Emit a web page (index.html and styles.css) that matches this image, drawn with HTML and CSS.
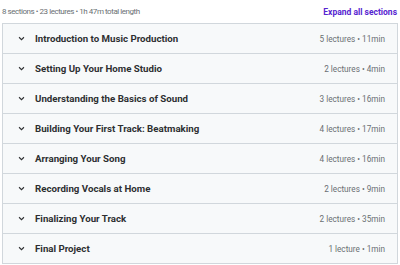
FILE: index.html
```html
<!DOCTYPE html>
<html>
<head>
    <title>Course content</title>
    <link rel="stylesheet" href="styles.css">
</head>
<body>
    <div class="curriculum">
        <div class="summary">
            <span class="totals">8 sections • 23 lectures • 1h 47m total length</span>
            <button class="expand-all">Expand all sections</button>
        </div>

        <div class="sections">
            <div class="section">
                <svg class="chevron" viewBox="0 0 10 6"><path d="M1.5 1.2 L5 4.6 L8.5 1.2" /></svg>
                <span class="title">Introduction to Music Production</span>
                <span class="meta">5 lectures • 11min</span>
            </div>
            <div class="section">
                <svg class="chevron" viewBox="0 0 10 6"><path d="M1.5 1.2 L5 4.6 L8.5 1.2" /></svg>
                <span class="title">Setting Up Your Home Studio</span>
                <span class="meta">2 lectures • 4min</span>
            </div>
            <div class="section">
                <svg class="chevron" viewBox="0 0 10 6"><path d="M1.5 1.2 L5 4.6 L8.5 1.2" /></svg>
                <span class="title">Understanding the Basics of Sound</span>
                <span class="meta">3 lectures • 16min</span>
            </div>
            <div class="section">
                <svg class="chevron" viewBox="0 0 10 6"><path d="M1.5 1.2 L5 4.6 L8.5 1.2" /></svg>
                <span class="title">Building Your First Track: Beatmaking</span>
                <span class="meta">4 lectures • 17min</span>
            </div>
            <div class="section">
                <svg class="chevron" viewBox="0 0 10 6"><path d="M1.5 1.2 L5 4.6 L8.5 1.2" /></svg>
                <span class="title">Arranging Your Song</span>
                <span class="meta">4 lectures • 16min</span>
            </div>
            <div class="section">
                <svg class="chevron" viewBox="0 0 10 6"><path d="M1.5 1.2 L5 4.6 L8.5 1.2" /></svg>
                <span class="title">Recording Vocals at Home</span>
                <span class="meta">2 lectures • 9min</span>
            </div>
            <div class="section">
                <svg class="chevron" viewBox="0 0 10 6"><path d="M1.5 1.2 L5 4.6 L8.5 1.2" /></svg>
                <span class="title">Finalizing Your Track</span>
                <span class="meta">2 lectures • 35min</span>
            </div>
            <div class="section">
                <svg class="chevron" viewBox="0 0 10 6"><path d="M1.5 1.2 L5 4.6 L8.5 1.2" /></svg>
                <span class="title">Final Project</span>
                <span class="meta">1 lecture • 1min</span>
            </div>
        </div>
    </div>
</body>
</html>
```
FILE: styles.css
```css
body {
    margin: 0;
    padding: 0 2px 0 2px;
    font-family: Roboto, "Liberation Sans", sans-serif;
    background-color: #ffffff;
    color: #2d2f31;
}
.summary {
    display: flex;
    justify-content: space-between;
    align-items: center;
    height: 23px;
    color: #6a6f73;
}
.totals {
    font-size: 8px;
    letter-spacing: -0.45px;
}
.expand-all {
    border: none;
    background: none;
    padding: 0 1px 0 0;
    font-family: inherit;
    font-size: 8.5px;
    font-weight: 700;
    color: #5624d0;
    cursor: pointer;
}
.sections {
    border: 1px solid #d1d7dc;
}
.section {
    display: flex;
    align-items: center;
    height: 29px;
    padding: 0 12px 0 15px;
    background-color: #f7f9fa;
    border-bottom: 1px solid #d1d7dc;
}
.section:last-child {
    border-bottom: none;
}
.chevron {
    width: 7px;
    height: 5px;
    fill: none;
    stroke: #2d2f31;
    stroke-width: 1.6;
    margin-right: 10px;
}
.title {
    flex: 1;
    font-size: 9.7px;
    font-weight: 700;
}
.meta {
    font-size: 8.2px;
    color: #6a6f73;
}
```
